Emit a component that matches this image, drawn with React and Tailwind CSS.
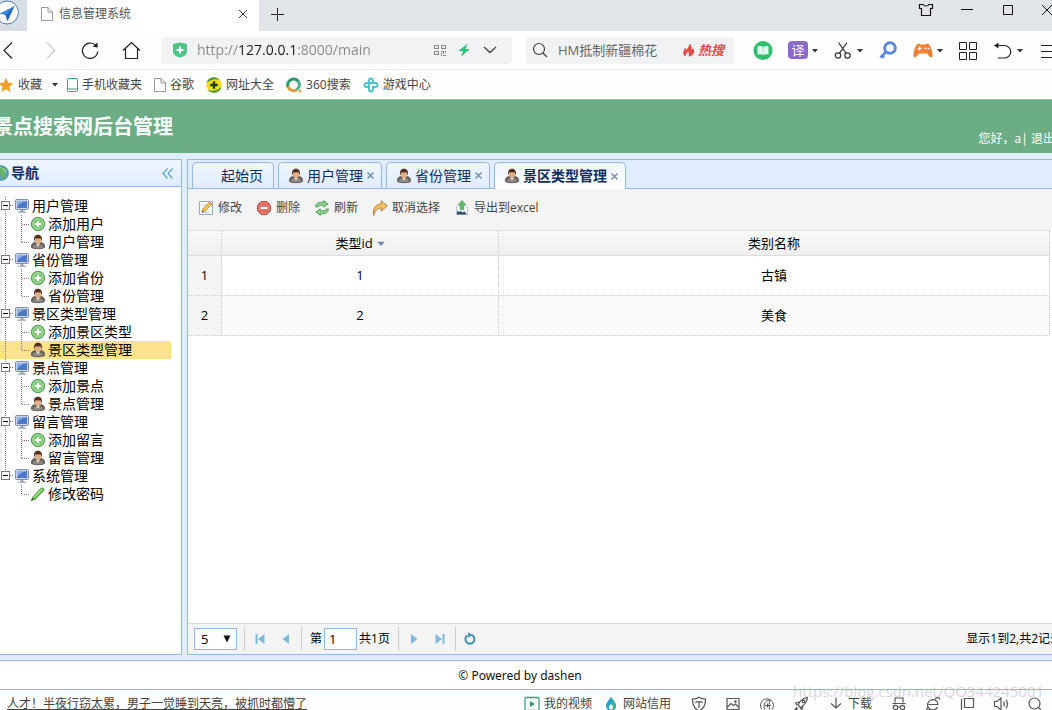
import { useState } from "react";

const Svg = ({ size = 16, children, className = "" }) => (
  <svg width={size} height={size} viewBox="0 0 16 16" fill="none" className={"block shrink-0 " + className} aria-hidden="true">
    {children}
  </svg>
);

const Caret = ({ width = 8, className = "text-[#333]" }) => (
  <svg width={width} height="5" viewBox="1 0 6 4" className={"block shrink-0 " + className} aria-hidden="true">
    <path d="M1 0.500h6L4 4z" fill="currentColor" />
  </svg>
);

/* ---------- page icons ---------- */
const Person = () => (
  <Svg>
    <path d="M1.500 13.500c-.6-2.600.8-4.500 3-5h7c2.200.5 3.600 2.400 3 5-1.600 1.600-11.400 1.600-13 0z" fill="#6c655e" stroke="#4a443f" strokeWidth=".7" />
    <path d="M2.300 13.300 5 10.500l3 1.500 3-1.500 2.700 2.800-2.700.8H5z" fill="#8f8a83" />
    <path d="M6.500 9h3v2.200L8 12.500l-1.500-1.300z" fill="#d9d4cc" />
    <ellipse cx="8" cy="6.200" rx="3.200" ry="3.700" fill="#e2ae84" />
    <path d="M4.200 7.500C3.500 3 4.800.8 8 .8s4.500 2.200 3.800 6.700C11.200 6 11 5 10.300 4c-1.500.8-3.600.8-4.600 0-.7 1-.9 2-1.500 3.500z" fill="#54301c" />
  </Svg>
);
const Add = () => (
  <Svg>
    <circle cx="8" cy="8" r="6.700" fill="#6fba69" stroke="#4f9a50" />
    <circle cx="8" cy="8" r="5.400" fill="#83c97a" stroke="#b8e2ae" strokeWidth=".8" />
    <path d="M8 4.800v6.400M4.800 8h6.400" stroke="#fff" strokeWidth="2" />
  </Svg>
);
const Monitor = () => (
  <Svg>
    <rect x="1.500" y="1.500" width="13" height="10" rx="1" fill="#c9d3e6" stroke="#7f8fb0" />
    <rect x="3" y="3" width="10" height="7" fill="#4f78c4" />
    <path d="M3 10V3h10C8 4 4.500 6 3 10z" fill="#8fb0e6" />
    <path d="M6.500 12h3v1.500h2.500v1.300H4v-1.300h2.500z" fill="#98a3b8" />
  </Svg>
);
const Pencil = () => (
  <Svg>
    <path d="M1.500 14.500 2.800 11 11.500 2c.8-.8 3.200 1.200 2.500 2.200L5.200 13.200z" fill="#5cb946" stroke="#348128" strokeWidth=".8" />
    <path d="M4 11.500 12.500 3" stroke="#a6e58c" strokeWidth="1.200" />
    <path d="m1.500 14.500.7-1.900 1.300 1.100z" fill="#333" />
  </Svg>
);
const Edit = () => (
  <Svg>
    <path d="M1.500 1.500h13v13h-13z" fill="#fff" stroke="#9aabc4" />
    <path d="M3.500 12.500h8M3.500 10h3M3.500 5h4" stroke="#c5cedb" />
    <path d="m4 12 .9-3.200L11.500 2l2.500 2-6.800 7z" fill="#f4c55a" stroke="#b07c25" strokeWidth=".8" />
    <path d="m10.500 3 1-1L14 4l-1 1.100z" fill="#e69a8a" />
    <path d="m4 12 .4-1.400 1.100.9z" fill="#333" />
  </Svg>
);
const Remove = () => (
  <Svg>
    <circle cx="8" cy="8" r="6.700" fill="#dd5349" stroke="#b53b35" />
    <circle cx="8" cy="8" r="5.500" fill="#e4675c" stroke="#f2a9a1" strokeWidth=".7" />
    <path d="M4.500 8h7" stroke="#fff" strokeWidth="2.400" />
  </Svg>
);
const Reload = () => (
  <Svg>
    <path d="M1.500 7c.3-3 2.200-4.800 5-4.800h3.200V.5L14.200 4l-4.500 3.200V5.300H7C5 5.300 4.500 6 4.300 7z" fill="#8fce8c" stroke="#3f9650" strokeWidth=".8" />
    <path d="M14.500 9c-.3 3-2.200 4.800-5 4.800H6.300v1.700L1.800 12l4.500-3.200v1.900H9c2 0 2.500-.7 2.700-1.700z" fill="#8fce8c" stroke="#3f9650" strokeWidth=".8" />
  </Svg>
);
const Redo = () => (
  <Svg>
    <path d="M1.500 15.500C.8 8.800 3.500 4.300 9.300 4V.8L15.200 6l-5.900 5V8C5.500 8 3.200 10.500 1.500 15.500z" fill="#f4c06c" stroke="#b47526" strokeWidth=".9" />
  </Svg>
);
const Export = () => (
  <Svg>
    <path d="M3.500 6.500h-1v8h11v-8h-1" stroke="#bfc8cc" />
    <path d="M8 .5 12 5h-2.300v4.500H6.300V5H4z" fill="#5fba6b" stroke="#3f9650" strokeWidth=".6" />
    <path d="M3 14.500v-3.500l2 1 1.500-1 2 1.500 2-1 2.500 3z" fill="#2f4f6e" />
  </Svg>
);
const Globe = () => (
  <Svg>
    <circle cx="8" cy="8" r="7.300" fill="#58a5c0" stroke="#3c7b8b" strokeWidth=".8" />
    <path d="M6 2c3-1 6 .5 7.500 3l-2 2 1.500 3-3 4c-2-.5-1-3-2-4s-3-.5-3.500-2.500S6 4 6 2z" fill="#66b45f" />
    <path d="M3 5c1-2 3-3 4.500-3" stroke="#d4eef5" />
    <path d="M9 3.500c2 .5 3.500 2 4 4" stroke="#c4e8c4" strokeWidth=".8" />
  </Svg>
);

/* ---------- browser icons ---------- */
const Page = () => (
  <svg width="12" height="14" viewBox="0 0 12 14" fill="#fff" stroke="#999" className="block shrink-0" aria-hidden="true">
    <path d="M.5.5H7L11.500 5v8.500H.5zM7 .5V5h4.500" />
  </svg>
);

const nodes = [
  { label: "用户管理", children: ["添加用户", "用户管理"] },
  { label: "省份管理", children: ["添加省份", "省份管理"] },
  { label: "景区类型管理", children: ["添加景区类型", "景区类型管理"] },
  { label: "景点管理", children: ["添加景点", "景点管理"] },
  { label: "留言管理", children: ["添加留言", "留言管理"] },
  { label: "系统管理", children: ["修改密码"] },
];

function childIcon(label) {
  if (label.startsWith("添加")) return <Add />;
  if (label.startsWith("修改")) return <Pencil />;
  return <Person />;
}

const Trunk = ({ last }) => (
  <svg width="14" height="18" className="block shrink-0" shapeRendering="crispEdges" aria-hidden="true">
    {!last && <path d="M5.500 0v18" stroke="#777" strokeDasharray="1 1" />}
  </svg>
);
const Elbow = ({ last }) => (
  <svg width="16" height="18" fill="none" className="block shrink-0" shapeRendering="crispEdges" aria-hidden="true">
    <path d={last ? "M7.500 0v10" : "M7.500 0v18"} stroke="#777" strokeDasharray="1 1" />
    <path d="M8 9.500h7" stroke="#777" strokeDasharray="1 1" />
  </svg>
);

function Tree() {
  const [closed, setClosed] = useState({});
  const [selected, setSelected] = useState("景区类型管理");
  return (
    <ul className="pt-[10px] pr-[10px] text-sm leading-[18px] text-black">
      {nodes.map((node, i) => {
        const last = i === nodes.length - 1;
        return (
          <li key={node.label}>
            <div className="flex h-[18px] items-center">
              <button
                aria-label={"折叠" + node.label}
                aria-expanded={!closed[i]}
                onClick={() => setClosed({ ...closed, [i]: !closed[i] })}
              >
                <svg width="14" height="18" fill="none" className="block" shapeRendering="crispEdges" aria-hidden="true">
                  <path d={last ? "M5.500 0v9" : "M5.500 0v18"} stroke="#777" strokeDasharray="1 1" />
                  <path d="M10 8.500h4" stroke="#777" strokeDasharray="1 1" />
                  <rect x="1.500" y="4.500" width="8" height="8" fill="#fff" stroke="#777" />
                  <path d={closed[i] ? "M3 8.500h5M5.500 6v5" : "M3 8.500h5"} stroke="#000" />
                </svg>
              </button>
              <Monitor />
              <span className="pl-[2px]">{node.label}</span>
            </div>
            {!closed[i] && (
              <ul>
                {node.children.map((label, j) => (
                  <li key={label}>
                    <button
                      onClick={() => setSelected(label)}
                      className={"flex h-[18px] w-full items-center text-left " + (selected === label ? "bg-[#fbe28b]" : "")}
                    >
                      <Trunk last={last} />
                      <Elbow last={j === node.children.length - 1} />
                      {childIcon(label)}
                      <span className="pl-[2px]">{label}</span>
                    </button>
                  </li>
                ))}
              </ul>
            )}
          </li>
        );
      })}
    </ul>
  );
}

function TabStrip() {
  return (
    <div className="flex h-[31px] shrink-0 bg-[#e1e5e9]">
      <div className="flex w-[27px] shrink-0 items-start bg-[#d8dee5]">
        <svg width="26" height="26" viewBox="0 0 26 26" className="-ml-[6px] block shrink-0" aria-hidden="true">
          <circle cx="13" cy="12.500" r="11.500" fill="#fff" stroke="#4a7fb5" />
          <path d="M20.500 6 5.500 13.500l6 1.500 2 6z" fill="#3b8ae0" />
          <path d="M20.500 6 11.500 15l2 6z" fill="#2568bd" />
        </svg>
      </div>
      <div className="flex w-[232px] items-center gap-[6px] bg-white px-[14px] pb-[3px] text-xs text-[#555]">
        <Page />
        <span className="flex-1">信息管理系统</span>
        <button aria-label="关闭标签页" className="-mr-[3px]">
          <svg width="10" height="10" viewBox="0 0 10 10" stroke="#333" className="block" aria-hidden="true">
            <path d="m1 1 8 8M9 1 1 9" />
          </svg>
        </button>
      </div>
      <button aria-label="新建标签页" className="flex w-9 items-center justify-center pb-[3px]">
        <svg width="14" height="14" stroke="#222" shapeRendering="crispEdges" className="block" aria-hidden="true">
          <path d="M7.500 1v13M1 7.500h13" />
        </svg>
      </button>
      <div className="-mr-[5px] ml-auto flex h-5 items-center gap-[25px]">
        <button aria-label="皮肤">
          <Svg><path d="M5 2.500c1 2 5 2 6 0h3.500v4h-2v7h-9v-7h-2v-4z" stroke="#111" strokeWidth="1.200" /></Svg>
        </button>
        <button aria-label="最小化"><Svg><path d="M2 7.500h12" stroke="#111" /></Svg></button>
        <button aria-label="最大化"><Svg><path d="M3.500 3.500h9v9h-9z" stroke="#111" /></Svg></button>
        <button aria-label="关闭"><Svg><path d="m1 3 10 10M11 3 1 13" stroke="#111" /></Svg></button>
      </div>
    </div>
  );
}

function ToolButton({ label, caret, children }) {
  return (
    <button aria-label={label} className="flex shrink-0 items-center gap-1">
      <svg width="20" height="20" viewBox="0 0 20 20" fill="none" className="block shrink-0" aria-hidden="true">
        {children}
      </svg>
      {caret && <Caret width={6} />}
    </button>
  );
}

function AddressBar() {
  return (
    <div className="flex h-[39px] shrink-0 items-center border-b border-[#e6e6ea] bg-[#fefefe]">
      <div className="-ml-[2px] mr-5 flex items-center gap-[21px]">
        <ToolButton label="后退"><path d="m14 2.500-8 8 8 8" stroke="#222" strokeWidth="1.200" /></ToolButton>
        <ToolButton label="前进"><path d="m8 2.500 8 8-8 8" stroke="#ccc" strokeWidth="1.200" /></ToolButton>
        <ToolButton label="刷新">
          <path d="M17.800 11.500A7.700 7.700 0 1 1 15.800 5.500" stroke="#222" strokeWidth="1.200" />
          <path d="m17.500 2.500.3 5-5-.7z" fill="#222" />
        </ToolButton>
        <ToolButton label="主页"><path d="m2 10.500 8.500-8 8.500 8M4.500 8.500v10h12v-10" stroke="#222" strokeWidth="1.200" /></ToolButton>
      </div>
      <div className="flex h-[27px] min-w-0 flex-1 items-center rounded-[3px] bg-[#f1f2f4] pr-[14px] pl-3">
        <svg width="14" height="16" viewBox="0 0 14 16" className="block shrink-0" aria-hidden="true">
          <path d="M0 2 7 .5 14 2v7c0 4-3 5.500-7 6.500C3 14.500 0 13 0 9z" fill="#4cc585" />
          <path d="M7 4.500v7M3.500 8h7" stroke="#fff" strokeWidth="2" />
        </svg>
        <input
          aria-label="地址栏"
          defaultValue="http://127.0.0.1:8000/main"
          className="ml-[10px] min-w-0 flex-1 bg-[linear-gradient(to_right,#888_42px,#1a1a1a_42px,#1a1a1a_100px,#888_100px)] bg-clip-text font-['Open_Sans','Noto_Sans_CJK_SC',sans-serif] text-sm leading-5 text-transparent outline-none"
        />
        <div className="flex shrink-0 items-center gap-[10px]">
          <button aria-label="二维码">
            <svg width="12" height="12" viewBox="0 0 12 12" fill="none" stroke="#888" shapeRendering="crispEdges" className="block" aria-hidden="true">
              <path d="M.5 1.500h4v3h-4zM7.500 1.500h4v3h-4zM.5 7.500h4v3h-4zM7 7.500h2.500V10M7.500 9v2.500M11.500 7v2M9 11.500h3" />
            </svg>
          </button>
          <button aria-label="极速模式">
            <Svg><path d="M11.500 1.500 2.500 9h4.500l-2 5.500 9-7.500H9.500z" fill="#2ec27e" /></Svg>
          </button>
          <button aria-label="展开"><Svg><path d="m2 5 6 5.500L14 5" stroke="#444" strokeWidth="1.300" /></Svg></button>
        </div>
      </div>
      <div className="ml-[14px] flex h-[27px] w-[208px] shrink-0 items-center rounded-[3px] bg-[#f1f2f4] px-[6px]">
        <Svg><circle cx="7" cy="7" r="5.500" stroke="#444" strokeWidth="1.200" /><path d="m11 11 4 4" stroke="#444" strokeWidth="1.300" /></Svg>
        <input aria-label="搜索" defaultValue="HM抵制新疆棉花" className="ml-[10px] min-w-0 flex-1 bg-transparent text-[13px] leading-5 text-[#666] outline-none" />
        <button className="flex items-center gap-[2px] pr-1 text-[13px] leading-5 font-bold text-[#e6484a] italic">
          <Svg size={14}>
            <path d="M8.500.5C9 4 6 5 5.500 8 4.500 7.500 4.300 6 4.300 5 1 8 0 14 4.500 15.500 3.500 13 6 11.500 7 9.500c1 2 1 4 .5 6C12.500 15 16 10.500 12.500 5c0 1.500-.5 2-1.500 2.500C11 4.500 11 2 8.500.5z" fill="#e6484a" />
          </Svg>
          热搜
        </button>
      </div>
      <div className="-mr-[6px] ml-[19px] flex shrink-0 items-center gap-[15px]">
        <ToolButton label="阅读">
          <circle cx="10" cy="10.500" r="9.500" fill="#2fbf71" />
          <path d="M4.500 6.500c2-.8 4-.5 5.500.5 1.500-1 3.500-1.300 5.500-.5v8c-2-.5-4-.5-5.500.5-1.500-1-3.500-1-5.500-.5z" fill="#e7f8ee" />
          <path d="M10 7v8" stroke="#a4dfbf" />
        </ToolButton>
        <button aria-label="翻译" className="flex items-center gap-1">
          <span className="flex h-[18px] w-5 items-center justify-center rounded-sm bg-[#8b68cf] text-[13px] leading-[18px] text-white">译</span>
          <Caret width={6} />
        </button>
        <ToolButton label="截图" caret>
          <circle cx="5" cy="15.500" r="2.700" stroke="#333" strokeWidth="1.200" />
          <circle cx="14.500" cy="15.500" r="2.700" stroke="#333" strokeWidth="1.200" />
          <path d="M6.500 13.200 14 2.500M13 13.200 5.500 2.500" stroke="#333" strokeWidth="1.200" />
        </ToolButton>
        <ToolButton label="密码">
          <circle cx="12" cy="8" r="5.300" stroke="#5b87dd" strokeWidth="3" />
          <path d="m8 12-5.500 5.500M4 15.500l2 2" stroke="#5b87dd" strokeWidth="2.600" />
        </ToolButton>
        <ToolButton label="游戏" caret>
          <path d="M4.500 4C6 3.300 7 4.500 8 4.500h4c1 0 2-1.200 3.500-.5 2.500 1.500 4 8 4 11.500 0 2-2 2.300-3.500.5L14 13.500H6L4 16c-1.500 1.800-3.500 1.500-3.500-.5C.5 12 2 5.500 4.500 4z" fill="#ef7f33" />
          <path d="M6.500 6.500v4M4.500 8.500h4" stroke="#fff" strokeWidth="1.300" />
          <circle cx="12.500" cy="8.500" r="1" fill="#fff" /><circle cx="15.500" cy="8.500" r="1" fill="#fff" />
        </ToolButton>
        <ToolButton label="应用">
          <path d="M1.500 2.500h7v7h-7zM11.500 2.500h7v7h-7zM1.500 12.500h7v7h-7zM11.500 12.500h7v7h-7z" stroke="#222" />
        </ToolButton>
        <ToolButton label="恢复" caret>
          <path d="M2 5.500h9.500a6 6 0 0 1 0 12.500H5" stroke="#222" strokeWidth="1.200" />
          <path d="m1 5.500 4.500-3v6z" fill="#222" />
        </ToolButton>
        <ToolButton label="菜单"><path d="M3 5.500h16M3 11.500h16M3 17.500h16" stroke="#222" /></ToolButton>
      </div>
    </div>
  );
}

function Bookmark({ icon, children, className = "" }) {
  return (
    <a href="#" className={"flex items-center gap-1 " + className}>
      {icon}
      <span>{children}</span>
    </a>
  );
}

function Bookmarks() {
  return (
    <nav className="flex h-[29px] shrink-0 items-center gap-3 overflow-hidden bg-[#fefefe] text-xs leading-4 whitespace-nowrap text-[#444]">
      <button className="-ml-[2px] flex items-center gap-1">
        <Svg><path d="m8 .8 2.200 4.800 5.200.6-3.900 3.500 1.100 5.200L8 12.200l-4.600 2.700 1.100-5.200L.6 6.200l5.200-.6z" fill="#f1a22c" /></Svg>
        <span className="pr-[6px]">收藏</span>
        <Caret width={6} />
      </button>
      <Bookmark className="-ml-[3px]" icon={
        <svg width="11" height="14" viewBox="0 0 11 14" fill="none" stroke="#3fa17c" className="block" aria-hidden="true"><rect x=".5" y=".5" width="10" height="13" rx="1" /><path d="M.5 11h10" /></svg>
      }>手机收藏夹</Bookmark>
      <Bookmark icon={<Page />}>谷歌</Bookmark>
      <Bookmark icon={
        <Svg>
          <circle cx="8" cy="8" r="7.700" fill="#f2dd1c" />
          <path d="M.5 6A7.700 7.700 0 0 1 14 3.300C9 .8 4.500 3 .5 6zM15.500 10A7.700 7.700 0 0 1 2 12.700c5 2.500 9.500.3 13.500-2.700z" fill="#3f9a3a" />
          <path d="M8 4.300v7.400M4.300 8h7.400" stroke="#1e3d12" strokeWidth="2.300" />
        </Svg>
      }>网址大全</Bookmark>
      <Bookmark icon={
        <Svg>
          <path d="M2 10A6 6 0 0 1 12.500 4.500" stroke="#2f9a68" strokeWidth="3" />
          <path d="M12.500 4.500A6 6 0 0 1 10 13" stroke="#46b58a" strokeWidth="3" />
          <path d="M2 9.500A6 6 0 0 0 10.500 13" stroke="#ee9a3c" strokeWidth="3" />
          <circle cx="14" cy="14" r="1.500" fill="#ee9a3c" />
        </Svg>
      }>360搜索</Bookmark>
      <Bookmark icon={
        <Svg>
          <path d="M10 6V3.500a2 2 0 0 0-4 0v9a2 2 0 0 0 4 0V10h2.500a2 2 0 0 0 0-4h-9a2 2 0 0 0 0 4H6" stroke="#4fc2c6" strokeWidth="1.900" />
        </Svg>
      }>游戏中心</Bookmark>
    </nav>
  );
}

const tabs = ["用户管理", "省份管理", "景区类型管理"];

function Tabs() {
  return (
    <div role="tablist" className="flex h-[29px] shrink-0 items-end gap-1 border-b border-[#95b8e7] bg-[#e0ecff] pl-1 text-sm leading-[18px] text-[#0e2d5f]">
      <button role="tab" aria-selected="false" className="h-[26px] rounded-t-[5px] border border-b-0 border-[#95b8e7] bg-linear-to-b from-[#eff5ff] to-[#e0ecff] pr-[10px] pl-7">
        起始页
      </button>
      {tabs.map((name) => {
        const active = name === "景区类型管理";
        return (
          <div
            key={name}
            className={
              "flex items-center rounded-t-[5px] border border-b-0 border-[#95b8e7] pr-[7px] pl-[9px] " +
              (active ? "-mb-px h-[27px] bg-linear-to-b from-[#eff5ff] to-white font-bold" : "h-[26px] bg-linear-to-b from-[#eff5ff] to-[#e0ecff]")
            }
          >
            <button role="tab" aria-selected={active} className="flex items-center gap-[3px]">
              <Person />
              {name}
            </button>
            <button aria-label={"关闭" + name} className="pl-1">
              <svg width="7" height="7" viewBox="0 0 7 7" stroke="#7088a8" strokeWidth="1.300" className="block" aria-hidden="true">
                <path d="m.5.5 6 6M6.500.5l-6 6" />
              </svg>
            </button>
          </div>
        );
      })}
    </div>
  );
}

const actions = [
  ["修改", Edit],
  ["删除", Remove],
  ["刷新", Reload],
  ["取消选择", Redo],
  ["导出到excel", Export],
];

const rows = [
  { id: 1, name: "古镇" },
  { id: 2, name: "美食" },
];

function Grid() {
  const head = "h-[26px] border-y border-r border-y-[#ddd] border-r-[#ccc] [border-right-style:dotted] bg-linear-to-b from-[#f9f9f9] to-[#efefef] p-0 font-normal";
  const cell = "h-10 border-r border-b border-dotted border-[#ccc] p-0 pb-px";
  return (
    <table className="w-[calc(100%-2px)] table-fixed border-separate border-spacing-0 text-center text-[13px] leading-4 text-black">
      <colgroup>
        <col className="w-[34px]" />
        <col className="w-[277px]" />
        <col />
      </colgroup>
      <thead>
        <tr>
          <th className={head} aria-label="序号" />
          <th className={head}>
            <button className="inline-flex items-center gap-1">类型id <Caret className="text-[#6f88a8]" /></button>
          </th>
          <th className={head}>类别名称</th>
        </tr>
      </thead>
      <tbody>
        {rows.map((row, i) => (
          <tr key={row.id} className={i % 2 ? "bg-[#fafafa]" : "bg-white"}>
            <td className={cell + " bg-[#f4f4f4]"}>{i + 1}</td>
            <td className={cell}>{row.id}</td>
            <td className={cell}>{row.name}</td>
          </tr>
        ))}
      </tbody>
    </table>
  );
}

const Divider = () => <span className="h-6 w-px shrink-0 bg-[#ccc]" />;

function PageButton({ label, d, bar }) {
  return (
    <button aria-label={label} className="flex h-6 w-[26px] shrink-0 items-center justify-center">
      <Svg><path d={d} fill="#7db9da" />{bar && <path d={bar} stroke="#7db9da" strokeWidth="2" />}</Svg>
    </button>
  );
}

function Pager() {
  return (
    <div className="flex h-[31px] shrink-0 items-center overflow-hidden border-t border-[#ddd] bg-[#f4f4f4] pl-[6px] text-xs leading-4 whitespace-nowrap text-black">
      <div className="relative mr-[7px] shrink-0">
        <select aria-label="每页条数" className="block h-[22px] w-[43px] appearance-none border border-[#95b8e7] bg-white pl-[6px] text-[13px] leading-4" defaultValue="5">
          <option>5</option>
          <option>10</option>
          <option>20</option>
        </select>
        <svg width="8" height="8" viewBox="0 0 8 8" className="pointer-events-none absolute top-[7px] right-[6px]" aria-hidden="true"><path d="M.5.5h7L4 7.500z" fill="#111" /></svg>
      </div>
      <Divider />
      <div className="flex px-[2px]">
        <PageButton label="首页" d="M12.500 3v10L6 8z" bar="M4.500 3v10" />
        <PageButton label="上一页" d="M11 3v10L4.500 8z" />
      </div>
      <Divider />
      <label className="flex items-center gap-[2px] px-2">
        第
        <input defaultValue="1" className="h-[22px] w-[33px] border border-[#95b8e7] bg-white px-1 text-[13px] leading-4 outline-none" />
        共1页
      </label>
      <Divider />
      <div className="flex px-[2px]">
        <PageButton label="下一页" d="M5 3v10L11.500 8z" />
        <PageButton label="末页" d="M3.500 3v10L10 8z" bar="M11.500 3v10" />
      </div>
      <Divider />
      <button aria-label="刷新列表" className="flex h-6 w-7 shrink-0 items-center justify-center">
        <Svg><path d="M9.500 4A4.500 4.500 0 1 1 5.500 4.400" stroke="#3b8fb5" strokeWidth="1.900" /><path d="m6 1.200 4.300 2.600L6.500 7z" fill="#3b8fb5" /></Svg>
      </button>
      <span className="-mr-[10px] ml-auto">显示1到2,共2记录</span>
    </div>
  );
}

const StatusIcon = ({ label, children }) => (
  <button aria-label={label}>
    <svg width="16" height="16" viewBox="0 0 16 16" fill="none" stroke="#555" strokeWidth="1.200" className="block" aria-hidden="true">{children}</svg>
  </button>
);

function StatusBar() {
  return (
    <div className="relative -mb-2 flex h-7 shrink-0 items-center bg-[#fdfdfd] pr-[9px] pl-[7px] text-xs leading-4 whitespace-nowrap text-[#444]">
      <a href="#" className="underline underline-offset-1">人才！半夜行窃太累，男子一觉睡到天亮，被抓时都懵了</a>
      <div className="ml-auto flex items-center gap-[18px]">
        <div className="flex items-center gap-[11px] pr-[2px]">
          <button className="flex items-center gap-1">
            <Svg><rect x="1" y="1.500" width="14" height="13" rx="1" stroke="#3fa17c" strokeWidth="1.300" /><path d="M6 5v6l5-3z" fill="#2f9a68" /></Svg>
            我的视频
          </button>
          <button className="flex items-center gap-1">
            <Svg><path d="M8 1c2 3 5 5.500 5 9a5 5 0 0 1-10 0c0-3.500 3-6 5-9z" fill="#2fa0c8" /><path d="M8 1c2 3 5 5.500 5 9a5 5 0 0 1-5 5c3-4 2-9 0-14z" fill="#3fb58a" /><path d="M8 8c1 1.200 2 2 2 3.500a2 2 0 0 1-4 0C6 10 7 9.200 8 8z" fill="#fff" /></Svg>
            网站信用
          </button>
        </div>
        <StatusIcon label="安全"><path d="M8 1.200c2 1.300 4 1.800 6.500 1.800 0 6-2 10-6.500 12C3.500 13 1.500 9 1.500 3 4 3 6 2.500 8 1.200zM4.500 7c1-1.800 2.500-1.800 3.500-.5 1-1.300 2.500-1.300 3.500.5M8 6.500V12" /></StatusIcon>
        <StatusIcon label="图片"><path d="M2 2.500h12v11H2zM2.500 11 6 7.500l2.500 2L10.500 8l3 3" /><circle cx="10.500" cy="5.500" r=".7" /></StatusIcon>
        <StatusIcon label="加速球"><path d="M3 13.500A6.500 6.500 0 1 1 13 13.500M5.500 13.500c-1.500-6 1-9 5.500-9.500-1 3-1 6-.5 9.500M6 9.500h6M8.500 7.500v4" strokeWidth="1" /></StatusIcon>
        <StatusIcon label="火箭"><path d="M14.500 1.500C10 2 7 4.500 5 9l2.500 2.500c4-2.500 6.500-5.500 7-10zM6.500 6 2.500 7l1.500 2M10 9.500l-1 4-2-1.500M4 11l-2.500 3.500L5 12.500" /><circle cx="10.500" cy="5.500" r="1.200" /></StatusIcon>
        <button className="flex items-center gap-1 px-px">
          <Svg><path d="M8 1.500V12M3 7.500 8 12l5-4.500M2 14.500h12" stroke="#555" strokeWidth="1.200" /></Svg>
          下载
        </button>
        <StatusIcon label="无痕模式"><path d="M4 6.500V2h8v4.500M1.500 7.500h13M6.500 11h3" /><circle cx="4.500" cy="11.500" r="2.200" /><circle cx="11.500" cy="11.500" r="2.200" /></StatusIcon>
        <StatusIcon label="内核"><path d="M12.500 11A5.200 5.200 0 1 1 13 8.500H3.500M10 3c3-2 5-1.500 4.500.5M3 10.500c-2 3-1.500 4.500 1.500 3" /></StatusIcon>
        <StatusIcon label="分屏"><path d="M5.500 2.500h9v9h-9zM2.500 3v11.500H13" /></StatusIcon>
        <StatusIcon label="声音"><path d="M1.500 5.500H4l4-3.500v12l-4-3.500H1.500zM10.500 5.500c1 1.500 1 3.500 0 5M13 3.500c2 3 2 6 0 9" /></StatusIcon>
        <StatusIcon label="缩放"><circle cx="7.500" cy="7.500" r="5.500" /><path d="m11.500 11.500 3 3" /></StatusIcon>
      </div>
      <span className="pointer-events-none absolute -top-[9px] right-2 text-[15px] leading-5 text-[#9a9a9a]/40">https://blog.csdn.net/QQ344245001</span>
    </div>
  );
}

export default function App() {
  return (
    <div className="flex h-screen flex-col overflow-hidden bg-[#e0ecff] font-['Open_Sans','Noto_Sans_CJK_SC',sans-serif]">
      <TabStrip />
      <AddressBar />
      <Bookmarks />

      <header className="flex h-[54px] shrink-0 items-center justify-between overflow-hidden border-t border-[#8cc3bd] bg-[#6bae86] whitespace-nowrap text-white">
        <h1 className="-ml-[7px] text-xl leading-6 font-bold">景点搜索网后台管理</h1>
        <p className="-mr-[3px] self-end pb-[6px] text-xs leading-4">
          您好，a| <a href="#">退出</a>
        </p>
      </header>

      <div className="flex min-h-0 flex-1 gap-[5px] pt-[6px] pb-[5px]">
        <aside className="flex w-[182px] shrink-0 flex-col border-y border-r border-[#95b8e7] bg-white">
          <div className="flex h-[27px] shrink-0 items-center border-b border-[#95b8e7] bg-linear-to-b from-[#eff5ff] to-[#e0ecff] pr-2 text-sm leading-[18px] font-bold text-[#0e2d5f]">
            <div className="-ml-[7px] flex items-center gap-[2px]"><Globe />导航</div>
            <button aria-label="收起导航" className="ml-auto">
              <svg width="11" height="11" viewBox="0 0 11 11" fill="none" stroke="#62a3cb" strokeWidth="1.200" className="block" aria-hidden="true"><path d="M5.500.5 1 5.500l4.500 5M10.500.5 6 5.500l4.500 5" /></svg>
            </button>
          </div>
          <Tree />
        </aside>

        <main className="flex min-w-0 flex-1 flex-col border-y border-l border-[#95b8e7] bg-white">
          <Tabs />
          <div role="toolbar" className="flex h-[41px] shrink-0 gap-[14px] bg-[#f4f4f4] pt-[11px] pl-[10px] text-xs leading-4 text-[#444]">
            {actions.map(([label, Icon]) => (
              <button key={label} className="flex h-4 items-center gap-1">
                <Icon />
                {label}
              </button>
            ))}
          </div>
          <div className="min-h-0 flex-1">
            <Grid />
          </div>
          <Pager />
        </main>
      </div>

      <footer className="flex h-[30px] shrink-0 items-center justify-center border-y border-[#95b8e7] bg-white pt-px pr-3 font-['Noto_Sans',sans-serif] text-xs leading-4 text-[#111]">
        © Powered by dashen
      </footer>
      <StatusBar />
    </div>
  );
}
